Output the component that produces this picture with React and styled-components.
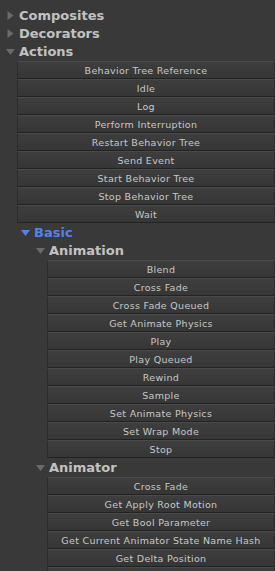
import React from "react";
import styled, { createGlobalStyle } from "styled-components";

const Global = createGlobalStyle`
  html, body { margin: 0; padding: 0; background: #393939; }
  body { width: 275px; height: 571px; overflow: hidden; }
`;

const Panel = styled.div`
  background: #393939;
  padding-top: 6px;
  font-family: "DejaVu Sans", "Liberation Sans", sans-serif;
  width: 275px;
  height: 571px;
  box-sizing: border-box;
  overflow: hidden;
`;

const Header = styled.div`
  display: flex;
  align-items: center;
  height: 18px;
  padding-left: ${(p) => 6 + p.$depth * 15}px;
  gap: 4px;
  font-size: 13px;
  font-weight: bold;
  color: ${(p) => (p.$active ? "#4f82f2" : "#c2c2c2")};
  white-space: nowrap;
`;

const Arrow = styled.svg`
  width: 9px;
  height: 9px;
  flex: none;
  fill: ${(p) => (p.$active ? "#4f82f2" : "#6b6b6b")};
`;

const List = styled.div`
  display: flex;
  flex-direction: column;
  padding-top: 1px;
  margin-left: ${(p) => 17 + p.$depth * 15}px;
`;

const Button = styled.div`
  box-sizing: border-box;
  display: flex;
  align-items: center;
  justify-content: center;
  background: linear-gradient(#3e3e3e, #363636);
  border-top: 1px solid #4a4a4a;
  border-bottom: 1px solid #222222;
  border-left: 1px solid #2c2c2c;
  border-right: 1px solid #2c2c2c;
  height: 18px;
  font-size: 9.5px;
  letter-spacing: 0.3px;
  color: #c8c8c8;
  white-space: nowrap;
`;

const tree = [
  { name: "Composites", open: false },
  { name: "Decorators", open: false },
  {
    name: "Actions",
    open: true,
    items: [
      "Behavior Tree Reference",
      "Idle",
      "Log",
      "Perform Interruption",
      "Restart Behavior Tree",
      "Send Event",
      "Start Behavior Tree",
      "Stop Behavior Tree",
      "Wait",
    ],
    children: [
      {
        name: "Basic",
        open: true,
        active: true,
        children: [
          {
            name: "Animation",
            open: true,
            items: [
              "Blend",
              "Cross Fade",
              "Cross Fade Queued",
              "Get Animate Physics",
              "Play",
              "Play Queued",
              "Rewind",
              "Sample",
              "Set Animate Physics",
              "Set Wrap Mode",
              "Stop",
            ],
          },
          {
            name: "Animator",
            open: true,
            items: [
              "Cross Fade",
              "Get Apply Root Motion",
              "Get Bool Parameter",
              "Get Current Animator State Name Hash",
              "Get Delta Position",
              "",
            ],
          },
        ],
      },
    ],
  },
];

function Node({ node, depth }) {
  return (
    <>
      <Header $depth={depth} $active={node.active}>
        <Arrow viewBox="0 0 9 9" $active={node.active}>
          {node.open ? (
            <polygon points="0,2 9,2 4.5,8" />
          ) : (
            <polygon points="1.5,0 7.5,4.5 1.5,9" />
          )}
        </Arrow>
        {node.name}
      </Header>
      {node.open && node.items && (
        <List $depth={depth}>
          {node.items.map((it, i) => (
            <Button key={i}>{it}</Button>
          ))}
        </List>
      )}
      {node.open &&
        node.children &&
        node.children.map((c) => <Node key={c.name} node={c} depth={depth + 1} />)}
    </>
  );
}

export default function App() {
  return (
    <Panel>
      <Global />
      {tree.map((n) => (
        <Node key={n.name} node={n} depth={0} />
      ))}
    </Panel>
  );
}
